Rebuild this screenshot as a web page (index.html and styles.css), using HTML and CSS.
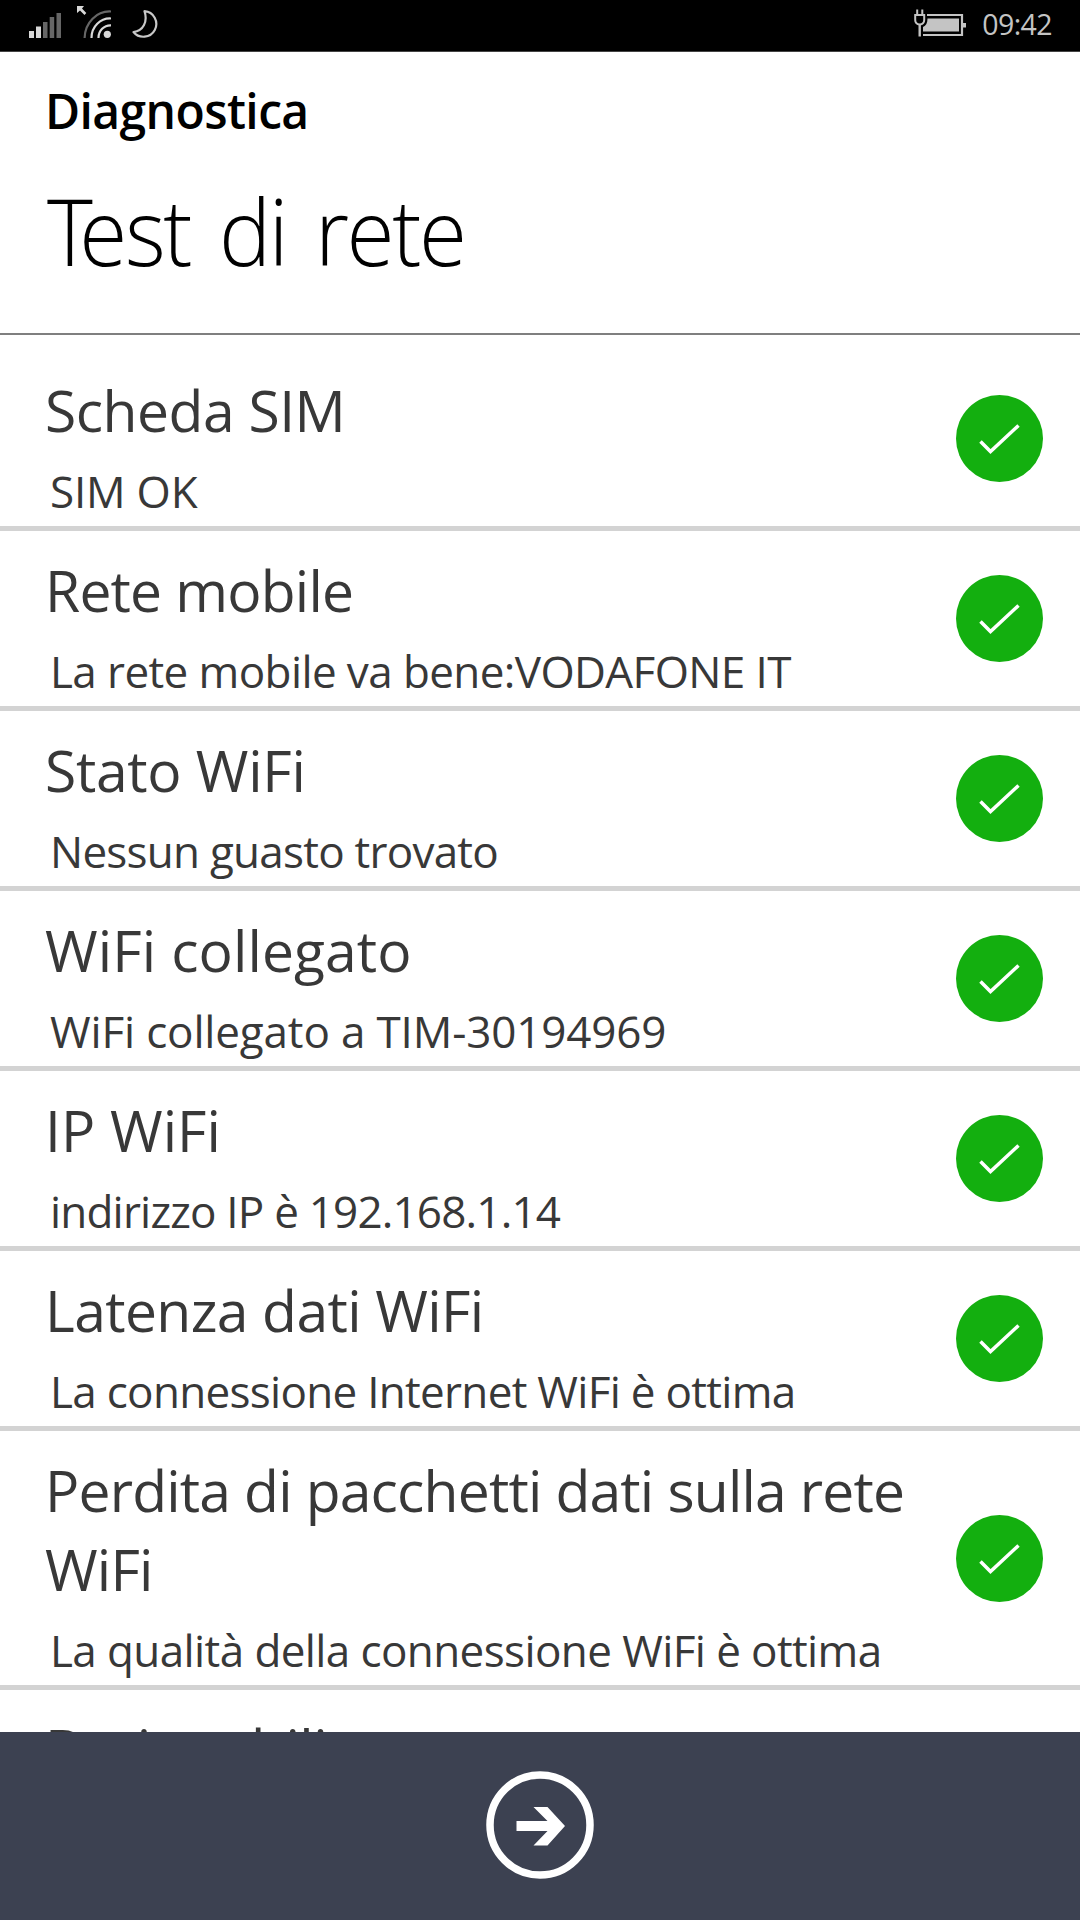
FILE: index.html
```
<!DOCTYPE html>
<html lang="it">
<head>
    <meta charset="utf-8">
    <title>Diagnostica</title>
    <link rel="stylesheet" href="styles.css">
</head>
<body>
    <div class="status-bar">
        <div class="status-left">
            <svg class="signal" width="33" height="26" viewBox="0 0 33 26">
                <path fill="#d8d8d8" d="M0 19h5v7H0zM7 14.500h5V26H7z"/>
                <path fill="#666" d="M14 10h4.500v16H14zM20.700 5h4.500v21h-4.500zM27.500 1H32v25h-4.500z"/>
            </svg>
            <svg class="wifi" width="34" height="33" viewBox="0 0 34 33">
                <path fill="#d8d8d8" d="M0 0h7L5 2.500 9.300 7 7.500 9 3 4.500 0 7z"/>
                <g fill="none" stroke="#d8d8d8" stroke-width="2.200">
                    <path stroke="#666" d="M7.600 32A25 27 0 0 1 34 5.500"/>
                    <path d="M14.500 32A18.500 19.500 0 0 1 34 12.500"/>
                    <path d="M21.500 32A12 12.500 0 0 1 34 19.300"/>
                </g>
                <circle cx="30.300" cy="28.300" r="3.600" fill="#d8d8d8"/>
            </svg>
            <svg class="moon" width="26" height="28" viewBox="0 0 26 28">
                <path fill="none" stroke="#c8c8c8" stroke-width="2.200" stroke-linejoin="round" d="M12.500 1.200A12.800 12.800 0 1 1 1.500 22C11 21 16 12 12.500 1.200z"/>
            </svg>
        </div>
        <div class="status-right">
            <svg class="battery" width="52" height="28" viewBox="0 0 52 28">
                <path fill="none" stroke="#c4c4c4" stroke-width="2.200" d="M13 6h35v20H9"/>
                <path fill="#c4c4c4" d="M49 14h3v4.500h-3zM13.500 9.500H45v13H9v-4.500c3-1.500 4.500-4 4.500-8.500z"/>
                <path fill="none" stroke="#c4c4c4" stroke-width="2" d="M1.200 6h9v5q0 4-4.500 4.500-4.500-.5-4.500-4.500zM3.200 6V0.500M8.300 6V0.500"/>
                <path stroke="#c4c4c4" stroke-width="2.400" d="M5.700 15v12.500"/>
            </svg>
            <span class="clock">09:42</span>
        </div>
    </div>

    <div class="header">
        <div class="app-name">Diagnostica</div>
        <h1><span class="cap">T</span>est di rete</h1>
    </div>

    <div class="results">
        <div class="row sim">
            <div class="info">
                <div class="name">Scheda SIM</div>
                <div class="detail">SIM OK</div>
            </div>
            <svg class="check" viewBox="0 0 87 87"><circle cx="43.500" cy="43.500" r="43.500"/><path d="M24.500 46.500l10 10L62.500 30.500"/></svg>
        </div>
        <div class="row mobile">
            <div class="info">
                <div class="name">Rete mobile</div>
                <div class="detail">La rete mobile va bene:VODAFONE IT</div>
            </div>
            <svg class="check" viewBox="0 0 87 87"><circle cx="43.500" cy="43.500" r="43.500"/><path d="M24.500 46.500l10 10L62.500 30.500"/></svg>
        </div>
        <div class="row wifi-state">
            <div class="info">
                <div class="name">Stato WiFi</div>
                <div class="detail">Nessun guasto trovato</div>
            </div>
            <svg class="check" viewBox="0 0 87 87"><circle cx="43.500" cy="43.500" r="43.500"/><path d="M24.500 46.500l10 10L62.500 30.500"/></svg>
        </div>
        <div class="row wifi-link">
            <div class="info">
                <div class="name">WiFi collegato</div>
                <div class="detail">WiFi collegato a TIM-30194969</div>
            </div>
            <svg class="check" viewBox="0 0 87 87"><circle cx="43.500" cy="43.500" r="43.500"/><path d="M24.500 46.500l10 10L62.500 30.500"/></svg>
        </div>
        <div class="row wifi-ip">
            <div class="info">
                <div class="name">IP WiFi</div>
                <div class="detail">indirizzo IP è 192.168.1.14</div>
            </div>
            <svg class="check" viewBox="0 0 87 87"><circle cx="43.500" cy="43.500" r="43.500"/><path d="M24.500 46.500l10 10L62.500 30.500"/></svg>
        </div>
        <div class="row latency">
            <div class="info">
                <div class="name">Latenza dati WiFi</div>
                <div class="detail">La connessione Internet WiFi è ottima</div>
            </div>
            <svg class="check" viewBox="0 0 87 87"><circle cx="43.500" cy="43.500" r="43.500"/><path d="M24.500 46.500l10 10L62.500 30.500"/></svg>
        </div>
        <div class="row packet-loss">
            <div class="info">
                <div class="name">Perdita di pacchetti dati sulla rete<br>WiFi</div>
                <div class="detail">La qualità della connessione WiFi è ottima</div>
            </div>
            <svg class="check" viewBox="0 0 87 87"><circle cx="43.500" cy="43.500" r="43.500"/><path d="M24.500 46.500l10 10L62.500 30.500"/></svg>
        </div>
        <div class="row">
            <div class="info">
                <div class="name">Dati mobili</div>
            </div>
        </div>
    </div>

    <div class="app-bar">
        <svg class="next" width="108" height="108" viewBox="0 0 108 108">
            <circle cx="54" cy="54" r="50" fill="none" stroke="#fff" stroke-width="7.500"/>
            <path fill="#fff" d="M30.500 50h31L47.500 36H61.500L79 55 61.500 74.500H47.500L61.500 60h-31z"/>
        </svg>
    </div>
</body>
</html>
```
FILE: styles.css
```
* {
    box-sizing: border-box;
}

body {
    margin: 0;
    height: 1920px;
    display: flex;
    flex-direction: column;
    overflow: hidden;
    background: #fff;
    color: #383838;
    font-family: "Open Sans", "Noto Sans", sans-serif;
}

svg {
    display: block;
    flex-shrink: 0;
}

/* status bar */
.status-bar {
    height: 52px;
    flex-shrink: 0;
    display: flex;
    justify-content: space-between;
    background: #000;
    border-bottom: 1px solid #444;
}

.status-left,
.status-right {
    display: flex;
    align-items: flex-start;
}

.status-left {
    padding-left: 29px;
}

.signal {
    margin-top: 12px;
}

.wifi {
    margin: 6px 0 0 15px;
}

.moon {
    margin: 10px 0 0 21px;
}

.status-right {
    padding-right: 28px;
}

.battery {
    margin-top: 9px;
}

.clock {
    margin: 4px 0 0 16px;
    font-size: 28.5px;
    line-height: 40px;
    letter-spacing: -0.6px;
    color: #c4c4c4;
}

/* page header */
.header {
    height: 283px;
    flex-shrink: 0;
    padding: 26px 45px 0;
    border-bottom: 2px solid #7f7f7f;
    color: #000;
}

.app-name {
    font-size: 48px;
    font-weight: 600;
    line-height: 66px;
    letter-spacing: -0.6px;
}

h1 {
    margin: 23px 0 0 2px;
    font-size: 93px;
    font-weight: 300;
    line-height: 126px;
    letter-spacing: -2.5px;
    word-spacing: 9px;
    white-space: nowrap;
    transform: scaleX(0.94);
    transform-origin: left;
}

.cap {
    margin-right: -12px;
}

/* test results */
.results {
    flex: 1;
    min-height: 0;
    overflow: hidden;
    padding-top: 16px;
}

.row {
    display: flex;
    justify-content: space-between;
    align-items: center;
    min-height: 180px;
    padding: 0 37.5px 0 45px;
    border-bottom: 5px solid #d3d3d3;
}

.info {
    align-self: flex-start;
    padding: 20px 0 5px;
    white-space: nowrap;
}

.name {
    font-size: 57px;
    line-height: 79px;
    letter-spacing: -0.5px;
}

.detail {
    margin: 11px 0 0 5px;
    font-size: 44px;
    line-height: 60px;
    letter-spacing: -0.6px;
}

.sim .detail { letter-spacing: -0.2px; }
.mobile .name { letter-spacing: -0.8px; }
.wifi-state .name { letter-spacing: -0.3px; }
.wifi-state .detail { letter-spacing: -0.75px; }
.wifi-link .name { letter-spacing: 0.1px; }
.wifi-link .detail { letter-spacing: -0.16px; }
.wifi-ip .name { letter-spacing: 0; }
.wifi-ip .detail { letter-spacing: -0.8px; }
.latency .name { letter-spacing: -0.6px; }
.latency .detail { letter-spacing: -0.7px; }
.packet-loss .name { letter-spacing: -0.82px; }

.check {
    width: 87px;
    height: 87px;
}

.check circle {
    fill: #13af0f;
}

.check path {
    fill: none;
    stroke: #fff;
    stroke-width: 3.5;
}

/* bottom bar */
.app-bar {
    height: 188px;
    flex-shrink: 0;
    display: flex;
    justify-content: center;
    padding-top: 39px;
    background: #3c4151;
}
```
